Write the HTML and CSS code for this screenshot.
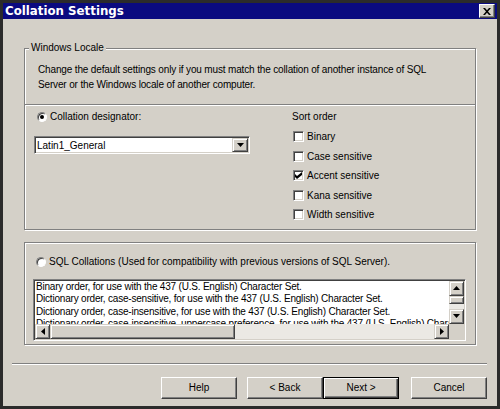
FILE: index.html
```html
<!DOCTYPE html>
<html lang="en">
<head>
  <meta charset="UTF-8">
  <title>Collation Settings</title>
  <link rel="stylesheet" href="styles.css">
</head>
<body>
  <div class="window">
    <div class="titlebar">
      <span class="title">Collation Settings</span>
      <span class="close-btn">
        <svg width="8" height="7" viewBox="0 0 8 7"><path d="M0 0h2l2 2.2 2-2.2h2l-3 3.5 3 3.5h-2l-2-2.2-2 2.2h-2l3-3.5z" fill="#000"/></svg>
      </span>
    </div>

    <div class="content">
      <fieldset class="group locale">
        <legend>Windows Locale</legend>
        <p class="desc">Change the default settings only if you must match the collation of another instance of SQL<br>Server or the Windows locale of another computer.</p>
        <div class="divider"></div>
        <div class="locale-body">
          <div class="designator">
            <div class="radio-row"><span class="radio checked"></span>Collation designator:</div>
            <div class="combo">
              <span class="combo-value">Latin1_General</span>
              <span class="combo-btn">
                <svg width="7" height="4" viewBox="0 0 7 4"><path d="M0 0h7l-3.5 4z" fill="#000"/></svg>
              </span>
            </div>
          </div>
          <div class="sort-order">
            <div class="sort-title">Sort order</div>
            <div class="check-row"><span class="check"></span>Binary</div>
            <div class="check-row"><span class="check"></span>Case sensitive</div>
            <div class="check-row">
              <span class="check">
                <svg width="7" height="7" viewBox="0 0 7 7"><path d="M0 2l2 2 5-4v3l-5 4-2-2z" fill="#000"/></svg>
              </span>Accent sensitive
            </div>
            <div class="check-row"><span class="check"></span>Kana sensitive</div>
            <div class="check-row"><span class="check"></span>Width sensitive</div>
          </div>
        </div>
      </fieldset>

      <div class="group sql">
        <div class="radio-row"><span class="radio"></span>SQL Collations (Used for compatibility with previous versions of SQL Server).</div>
        <div class="listbox">
          <div class="list-items">
            <div>Binary order, for use with the 437 (U.S. English) Character Set.</div>
            <div>Dictionary order, case-sensitive, for use with the 437 (U.S. English) Character Set.</div>
            <div>Dictionary order, case-insensitive, for use with the 437 (U.S. English) Character Set.</div>
            <div>Dictionary order, case-insensitive, uppercase preference, for use with the 437 (U.S. English) Character Set.</div>
          </div>
          <div class="vscroll">
            <span class="sb-btn"><svg width="7" height="4" viewBox="0 0 7 4"><path d="M0 4h7l-3.5-4z" fill="#000"/></svg></span>
            <span class="sb-thumb v"></span>
            <span class="sb-track"></span>
            <span class="sb-btn"><svg width="7" height="4" viewBox="0 0 7 4"><path d="M0 0h7l-3.5 4z" fill="#000"/></svg></span>
          </div>
          <div class="hscroll">
            <span class="sb-btn"><svg width="4" height="7" viewBox="0 0 4 7"><path d="M4 0v7l-4-3.5z" fill="#000"/></svg></span>
            <span class="sb-thumb h"></span>
            <span class="sb-track"></span>
            <span class="sb-btn"><svg width="4" height="7" viewBox="0 0 4 7"><path d="M0 0v7l4-3.5z" fill="#000"/></svg></span>
          </div>
          <div class="corner"></div>
        </div>
      </div>
    </div>

    <div class="footer">
      <div class="separator"></div>
      <div class="buttons">
        <button class="btn help">Help</button>
        <button class="btn">&lt; Back</button>
        <button class="btn default">Next &gt;</button>
        <button class="btn cancel">Cancel</button>
      </div>
    </div>
  </div>
</body>
</html>
```

FILE: styles.css
```css
body {
  margin: 0;
  font-family: "Liberation Sans", Arial, sans-serif;
  font-size: 10px;
  color: #000;
  background: #d4d0c8;
}

.window {
  width: 500px;
  height: 409px;
  box-sizing: border-box;
  border: 3px solid #2b2b2b;
  background: #d4d0c8;
  display: flex;
  flex-direction: column;
}

/* title bar */
.titlebar {
  height: 16px;
  background: #0a0a80;
  display: flex;
  align-items: center;
  justify-content: space-between;
  padding: 0 2px;
}

.title {
  font-family: "DejaVu Sans", sans-serif;
  font-weight: bold;
  font-size: 11.8px;
  color: #fff;
}

.close-btn {
  width: 16px;
  height: 14px;
  box-sizing: border-box;
  background: #d4d0c8;
  border: 1px solid;
  border-color: #fff #404040 #404040 #fff;
  box-shadow: inset -1px -1px #808080;
  display: flex;
  align-items: center;
  justify-content: center;
}

/* main area */
.content {
  padding: 0 21px;
}

.group {
  margin: 0;
  padding: 0;
  min-width: 0;
  border: 1px solid #808080;
  box-shadow: inset 1px 1px #fff, 1px 1px #fff;
}

.locale {
  margin-top: 22px;
}

.locale legend {
  margin-left: 4px;
  padding: 0 2px;
  line-height: 14px;
  background: #d4d0c8;
}

.desc {
  margin: 0;
  padding: 7px 14px 0 13px;
  line-height: 15px;
  letter-spacing: -0.15px;
}

.divider {
  margin-top: 12px;
  border-top: 1px solid #808080;
  border-bottom: 1px solid #fff;
}

.locale-body {
  display: flex;
  padding: 4px 0 4px 9px;
}

.designator {
  width: 216px;
}

.radio-row {
  display: flex;
  align-items: center;
  line-height: 14px;
  padding-left: 3px;
}

.radio {
  width: 10px;
  height: 10px;
  box-sizing: border-box;
  border-radius: 50%;
  border: 1px solid;
  border-color: #808080 #fff #fff #808080;
  box-shadow: inset 1px 1px #404040;
  background: #fff;
  margin-right: 3px;
  display: flex;
  align-items: center;
  justify-content: center;
}

.radio.checked::after {
  content: "";
  width: 4px;
  height: 4px;
  border-radius: 50%;
  background: #000;
}

.combo {
  margin-top: 12px;
  height: 18px;
  box-sizing: border-box;
  border: 1px solid;
  border-color: #808080 #fff #fff #808080;
  box-shadow: inset 1px 1px #404040, inset -1px -1px #d4d0c8;
  background: #fff;
  padding: 1px;
  display: flex;
  align-items: center;
}

.combo-value {
  flex: 1;
  padding-left: 1px;
}

.combo-btn {
  width: 16px;
  height: 14px;
  box-sizing: border-box;
  background: #d4d0c8;
  border: 1px solid;
  border-color: #d4d0c8 #404040 #404040 #d4d0c8;
  box-shadow: inset 1px 1px #fff, inset -1px -1px #808080;
  display: flex;
  align-items: center;
  justify-content: center;
}

.sort-order {
  margin-left: 42px;
}

.sort-title {
  line-height: 14px;
  margin-bottom: 3px;
}

.check-row {
  height: 19.5px;
  display: flex;
  align-items: center;
  padding-left: 1px;
}

.check {
  width: 11px;
  height: 11px;
  box-sizing: border-box;
  border: 1px solid;
  border-color: #808080 #fff #fff #808080;
  box-shadow: inset 1px 1px #404040, inset -1px -1px #d4d0c8;
  background: #fff;
  margin-right: 3px;
  display: flex;
  align-items: center;
  justify-content: center;
}

/* SQL collations group */
.sql {
  margin-top: 12px;
  padding: 12px 9px 3px 8px;
}

.listbox {
  margin-top: 10px;
  height: 62px;
  box-sizing: border-box;
  border: 1px solid;
  border-color: #808080 #fff #fff #808080;
  box-shadow: inset 1px 1px #404040, inset -1px -1px #d4d0c8;
  padding: 1px;
  background: #fff;
  display: grid;
  grid-template-columns: 1fr 15px;
  grid-template-rows: 1fr 15px;
}

.list-items {
  overflow: hidden;
  white-space: nowrap;
  line-height: 12.5px;
  padding-left: 1px;
  letter-spacing: -0.2px;
}

.vscroll {
  display: flex;
  flex-direction: column;
  background: #ebe9e4;
}

.hscroll {
  display: flex;
  background: #ebe9e4;
}

.sb-btn {
  width: 15px;
  height: 15px;
  flex: none;
  box-sizing: border-box;
  background: #d4d0c8;
  border: 1px solid;
  border-color: #d4d0c8 #404040 #404040 #d4d0c8;
  box-shadow: inset 1px 1px #fff, inset -1px -1px #808080;
  display: flex;
  align-items: center;
  justify-content: center;
}

.sb-thumb {
  flex: none;
  box-sizing: border-box;
  background: #d4d0c8;
  border: 1px solid;
  border-color: #d4d0c8 #404040 #404040 #d4d0c8;
  box-shadow: inset 1px 1px #fff, inset -1px -1px #808080;
}

.sb-thumb.v {
  height: 8px;
}

.sb-thumb.h {
  width: 185px;
}

.sb-track {
  flex: 1;
}

.corner {
  background: #d4d0c8;
}

/* footer */
.footer {
  padding: 0 10px 0 9px;
}

.separator {
  margin-top: 18px;
  border-top: 1px solid #808080;
  border-bottom: 1px solid #fff;
}

.buttons {
  display: flex;
  justify-content: flex-end;
  margin-top: 12px;
}

.btn {
  width: 76px;
  height: 22px;
  box-sizing: border-box;
  font-family: "Liberation Sans", Arial, sans-serif;
  font-size: 10px;
  color: #000;
  background: #d4d0c8;
  border: 1px solid;
  border-color: #fff #404040 #404040 #fff;
  box-shadow: inset -1px -1px #808080;
  padding: 0;
}

.btn.help {
  margin-right: 10px;
}

.btn.default {
  border-color: #000;
  box-shadow: inset 1px 1px #fff, inset -1px -1px #404040, inset -2px -2px #808080;
  margin-right: 12px;
}
```
